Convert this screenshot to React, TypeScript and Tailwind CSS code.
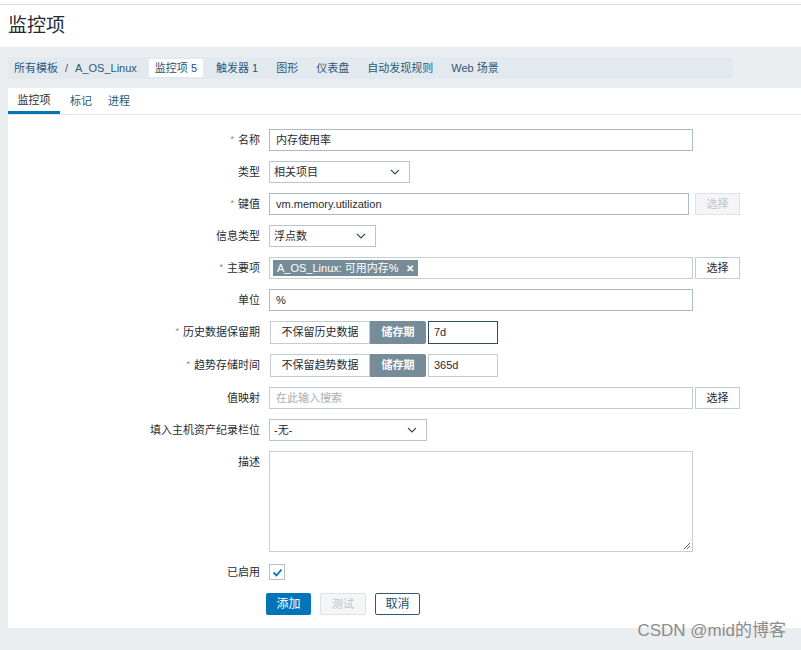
import React from "react";

const font = {
    fontFamily: '"Liberation Sans", Arial, "Noto Sans CJK SC", sans-serif',
};

function Chevron() {
    return (
        <svg width="10" height="6" viewBox="0 0 10 6" className="shrink-0">
            <path d="M1 1l4 4 4-4" fill="none" stroke="#3a4a52" strokeWidth="1.1" />
        </svg>
    );
}

function Label({ text, req }: { text: string; req?: boolean }) {
    return (
        <div className="flex h-[22px] items-center justify-end text-[11px] text-[#1f2c33]">
            {req && <span className="mr-[4px] text-[9px] text-[#7d8a91]">*</span>}
            {text}
        </div>
    );
}

function Input({ value, w, placeholder, dark }: { value?: string; w: string; placeholder?: string; dark?: boolean }) {
    return (
        <div
            className={`flex h-[22px] items-center border px-[6px] text-[11px] ${w} ${
                dark ? "border-[#34556a]" : "border-[#a9bdc9]"
            } ${placeholder ? "text-[#a7b0b5]" : "text-[#1f2c33]"}`}
        >
            {value ?? placeholder}
        </div>
    );
}

function Select({ value, w }: { value: string; w: string }) {
    return (
        <div className={`flex h-[22px] items-center justify-between border border-[#b9c5cc] pl-[4px] pr-[9px] text-[11px] text-[#1f2c33] ${w}`}>
            <span>{value}</span>
            <Chevron />
        </div>
    );
}

function PickBtn({ disabled }: { disabled?: boolean }) {
    return (
        <div
            className={`flex h-[22px] w-[45px] items-center justify-center border text-[11px] ${
                disabled
                    ? "border-[#dfe3e6] bg-[#f4f5f6] text-[#bfc6ca]"
                    : "border-[#c3ccd1] bg-white text-[#1f2c33]"
            }`}
        >
            选择
        </div>
    );
}

function Period({ off, val, focus }: { off: string; val: string; focus?: boolean }) {
    return (
        <div className="flex h-[23px] items-stretch">
            <div className="ml-[1px] flex w-[100px] items-center justify-center border border-[#c3ccd1] text-[11px] text-[#1f2c33]">
                {off}
            </div>
            <div className="flex w-[56px] items-center justify-center rounded-r-[2px] bg-[#768d99] text-[11px] font-bold text-white">
                储存期
            </div>
            <div
                className={`ml-[2px] flex w-[70px] items-center border px-[5px] text-[11px] text-[#1f2c33] ${
                    focus ? "border-[#2f4d61]" : "border-[#c3ccd1]"
                }`}
            >
                {val}
            </div>
        </div>
    );
}

export default function App() {
    const crumbs = ["图形", "仪表盘", "自动发现规则", "Web 场景"];

    return (
        <div className="relative flex h-[650px] w-[801px] flex-col overflow-hidden bg-[#ebeef0]" style={font}>
            <div className="h-[4px] bg-white" />
            <div className="flex h-[43px] items-center border-t border-[#d9dee1] bg-white pl-[8px] text-[19px] text-[#1f2c33]">
                监控项
            </div>

            {/* breadcrumbs */}
            <div className="mt-[10px] ml-[8px] flex h-[22px] w-[725px] items-center bg-[#e3eaef] pl-[6px] text-[11px] text-[#2b5877]">
                <span>所有模板</span>
                <span className="mx-[7px] text-[#4a5a63]">/</span>
                <span>A_OS_Linux</span>
                <span className="ml-[12px] flex h-[18px] items-center bg-white px-[6px] text-[#1f4f70]">监控项 5</span>
                <span className="ml-[13px]">触发器 1</span>
                {crumbs.map((c) => (
                    <span key={c} className="ml-[18px]">
                        {c}
                    </span>
                ))}
            </div>

            <div className="mt-[9px] ml-[8px] h-[540px] bg-white">
                <div className="flex h-[27px] items-stretch border-b border-[#e3e7ea] text-[11px]">
                    <div className="flex w-[52px] items-center justify-center border-b-[3px] border-[#0275b8] pt-[2px] text-[#1f2c33]">
                        监控项
                    </div>
                    <div className="flex items-center px-[10px] pt-[1px] text-[#2b5877]">标记</div>
                    <div className="flex items-center px-[6px] pt-[1px] text-[#2b5877]">进程</div>
                </div>

                <div className="grid grid-cols-[252px_1fr] gap-x-[9px] gap-y-[10px] pt-[14px]">
                    <Label text="名称" req />
                    <Input value="内存使用率" w="w-[424px]" />

                    <Label text="类型" />
                    <Select value="相关项目" w="w-[141px]" />

                    <Label text="键值" req />
                    <div className="flex gap-[6px]">
                        <Input value="vm.memory.utilization" w="w-[420px]" />
                        <PickBtn disabled />
                    </div>

                    <Label text="信息类型" />
                    <Select value="浮点数" w="w-[107px]" />

                    <Label text="主要项" req />
                    <div className="flex gap-[2px]">
                        <div className="flex h-[22px] w-[424px] items-center border border-[#c3ccd1] px-[3px]">
                            <span className="flex h-[16px] items-center gap-[7px] bg-[#768d99] px-[4px] text-[11px] text-white">
                                A_OS_Linux: 可用内存%
                                <span className="text-[10px] font-bold">✕</span>
                            </span>
                        </div>
                        <PickBtn />
                    </div>

                    <Label text="单位" />
                    <Input value="%" w="w-[424px]" />

                    <Label text="历史数据保留期" req />
                    <Period off="不保留历史数据" val="7d" focus />

                    <Label text="趋势存储时间" req />
                    <Period off="不保留趋势数据" val="365d" />

                    <Label text="值映射" />
                    <div className="flex gap-[2px]">
                        <Input placeholder="在此输入搜索" w="w-[424px] border-[#c3ccd1]" />
                        <PickBtn />
                    </div>

                    <Label text="填入主机资产纪录栏位" />
                    <Select value="-无-" w="w-[158px]" />

                    <div className="flex justify-end pt-[3px] text-[11px] text-[#1f2c33]">描述</div>
                    <div className="relative h-[101px] w-[424px] border border-[#c6cccf]">
                        <svg width="9" height="9" viewBox="0 0 9 9" className="absolute right-[1px] bottom-[1px]">
                            <path d="M8 2L2 8M8 5L5 8" stroke="#555" strokeWidth="0.9" />
                        </svg>
                    </div>
                </div>

                <div className="mt-[12px] grid grid-cols-[252px_1fr] gap-x-[9px]">
                    <div className="flex h-[16px] items-center justify-end text-[11px] text-[#1f2c33]">已启用</div>
                    <div className="flex h-[16px] w-[16px] items-center justify-center border border-[#b3c1c9]">
                        <svg width="11" height="9" viewBox="0 0 11 9">
                            <path d="M1.5 4.5l3 3 5-6" fill="none" stroke="#0275b8" strokeWidth="1.8" />
                        </svg>
                    </div>
                </div>

                <div className="mt-[13px] flex gap-[9px] pl-[258px] text-[11px]">
                    <div className="flex h-[22px] w-[45px] items-center justify-center rounded-[2px] bg-[#0275b8] text-[12px] text-white">
                        添加
                    </div>
                    <div className="flex h-[22px] w-[46px] items-center justify-center rounded-[2px] border border-[#dce1e4] bg-[#f4f5f6] text-[#bdc4c8]">
                        测试
                    </div>
                    <div className="flex h-[22px] w-[45px] items-center justify-center rounded-[2px] border border-[#2c5a78] text-[12px] text-[#1f4a66]">
                        取消
                    </div>
                </div>
            </div>

            <div className="absolute right-[15px] bottom-[7px] text-[17px] text-[#8c8c8c]">CSDN @mid的博客</div>
        </div>
    );
}
